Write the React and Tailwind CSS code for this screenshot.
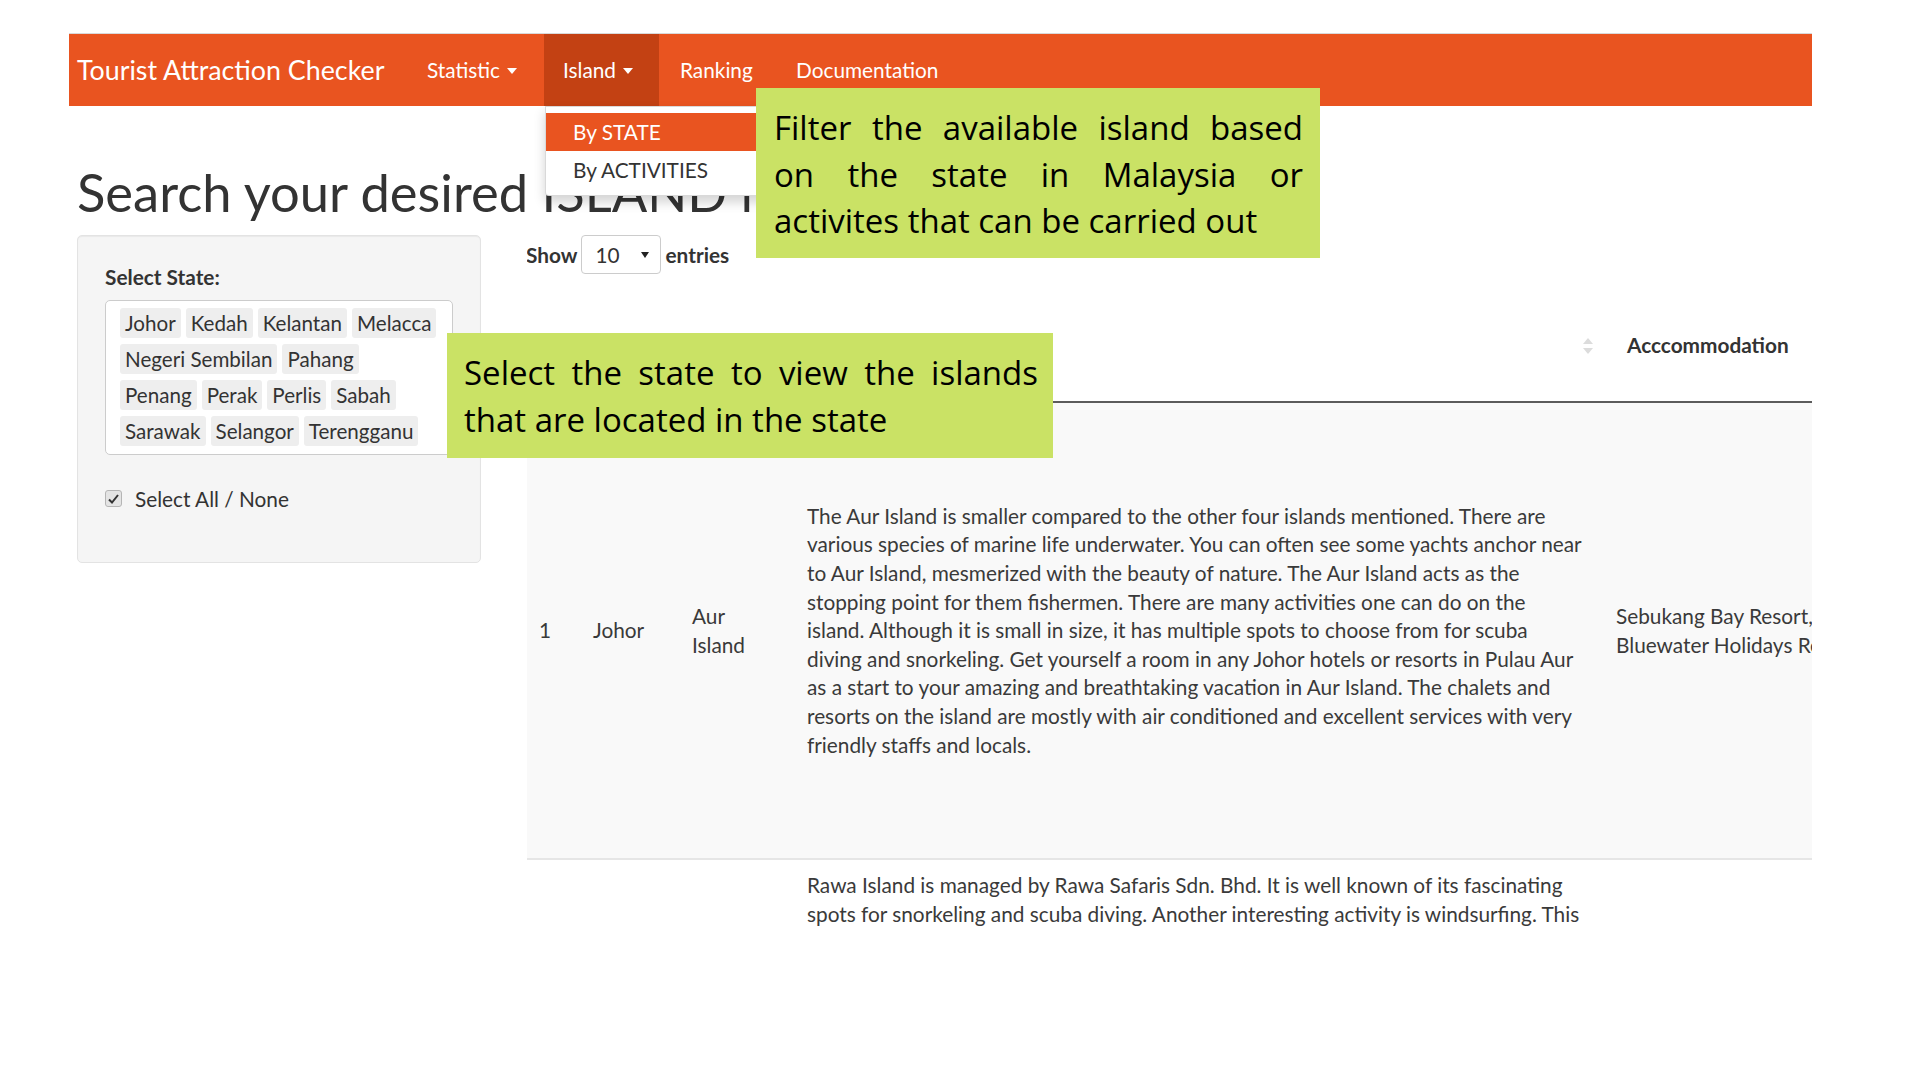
import React from "react";

const states = [
  ["Johor", "Kedah", "Kelantan", "Melacca"],
  ["Negeri Sembilan", "Pahang"],
  ["Penang", "Perak", "Perlis", "Sabah"],
  ["Sarawak", "Selangor", "Terengganu"],
];

const aurLines = [
  "The Aur Island is smaller compared to the other four islands mentioned. There are",
  "various species of marine life underwater. You can often see some yachts anchor near",
  "to Aur Island, mesmerized with the beauty of nature. The Aur Island acts as the",
  "stopping point for them fishermen. There are many activities one can do on the",
  "island. Although it is small in size, it has multiple spots to choose from for scuba",
  "diving and snorkeling. Get yourself a room in any Johor hotels or resorts in Pulau Aur",
  "as a start to your amazing and breathtaking vacation in Aur Island. The chalets and",
  "resorts on the island are mostly with air conditioned and excellent services with very",
  "friendly staffs and locals.",
];

const rawaLines = [
  "Rawa Island is managed by Rawa Safaris Sdn. Bhd. It is well known of its fascinating",
  "spots for snorkeling and scuba diving. Another interesting activity is windsurfing. This",
];

const Caret = () => (
  <svg width="10" height="6" viewBox="0 0 10 6" className="ml-[7px] mt-[2px]">
    <path d="M0 0h10L5 6z" fill="currentColor" />
  </svg>
);

// justified callout, every line but the last is stretched
const Callout = ({ lines, className }) => (
  <div className={`absolute bg-[#cae265] font-['Open_Sans',sans-serif] text-[33px] leading-[46.5px] text-black ${className}`}>
    {lines.map((l, i) => (
      <div
        key={i}
        className={i < lines.length - 1 ? "text-justify [text-align-last:justify]" : "text-left"}
      >
        {l}
      </div>
    ))}
  </div>
);

const Navbar = () => (
  <div className="ml-[69px] flex h-[72px] w-[1743px] items-stretch bg-[#e95420] text-[20.8px] text-white">
    <div className="flex w-[337px] items-center pl-[8px] text-[26.8px]">Tourist Attraction Checker</div>
    <div className="flex w-[138px] items-center pl-[21px]">
      Statistic <Caret />
    </div>
    <div className="flex w-[115px] items-center bg-[#c34113] pl-[19px]">
      Island <Caret />
    </div>
    <div className="flex w-[115px] items-center pl-[21px]">Ranking</div>
    <div className="flex items-center pl-[22px]">Documentation</div>
  </div>
);

const StatePanel = () => (
  <div className="h-[328px] w-[404px] rounded-[5px] border border-[#e3e3e3] bg-[#f5f5f5] px-[27px] pt-[26px] shadow-[inset_0_1px_1px_rgba(0,0,0,0.05)]">
    <div className="text-[20.8px] font-bold leading-[29px] text-[#333]">Select State:</div>
    <div className="mt-[9px] flex h-[155px] w-[348px] flex-col gap-[6px] rounded-[5px] border border-[#ccc] bg-white px-[14px] pt-[7px]">
      {states.map((row, i) => (
        <div key={i} className="flex gap-[5px]">
          {row.map((s) => (
            <span key={s} className="h-[30px] rounded-[3px] bg-[#eee] px-[5px] text-[20.6px] leading-[30px] text-[#333]">
              {s}
            </span>
          ))}
        </div>
      ))}
    </div>
    <div className="mt-[29px] flex items-center text-[20.8px] leading-[29px] text-[#333]">
      <span className="flex h-[17px] w-[17px] items-center justify-center rounded-[3px] border border-[#b5b5b5] bg-[#e4e4e4]">
        <svg width="11" height="10" viewBox="0 0 11 10">
          <path d="M1 5.5l3 3 6-7.5" fill="none" stroke="#333" strokeWidth="2" />
        </svg>
      </span>
      <span className="ml-[13px]">Select All / None</span>
    </div>
  </div>
);

const SortIcon = () => (
  <svg width="10" height="16" viewBox="0 0 10 16">
    <path d="M5 0l5 6H0z" fill="#dcdcdc" />
    <path d="M5 16l5-6H0z" fill="#dcdcdc" />
  </svg>
);

const IslandTable = () => (
  <div className="w-[1285px] overflow-hidden">
    <div className="-ml-px flex h-[39px] items-center text-[20.8px] font-bold text-[#333]">
      <span>Show</span>
      <div className="relative ml-[4px] flex h-[39px] w-[80px] items-center rounded-[4px] border border-[#ccc] bg-white pl-[13px] font-normal">
        10
        <svg width="8" height="6" viewBox="0 0 8 6" className="absolute right-[11px] top-[16px]">
          <path d="M0 0h8L4 6z" fill="#222" />
        </svg>
      </div>
      <span className="ml-[4px]">entries</span>
    </div>

    <div className="mt-[16px] w-[1400px] text-[20.8px] leading-[28.6px] text-[#3a3a3a]">
      <div className="flex h-[113px] items-center border-b-2 border-[#5c5c5c] font-bold text-[#333]">
        <div className="w-[55px]" />
        <div className="w-[99px]" />
        <div className="w-[115px]" />
        <div className="flex w-[809px] items-center justify-end pr-[12px]">
          <SortIcon />
        </div>
        <div className="pl-[22px]">Acccommodation</div>
      </div>

      <div className="flex h-[457px] items-center border-b-2 border-[#e6e6e6] bg-[#f9f9f9]">
        <div className="w-[55px] pl-[12px]">1</div>
        <div className="w-[99px] pl-[11px]">Johor</div>
        <div className="w-[115px] pl-[11px]">
          Aur
          <br />
          Island
        </div>
        <div className="w-[809px] pl-[11px]">
          {aurLines.map((l, i) => (
            <div key={i} className="whitespace-nowrap">{l}</div>
          ))}
        </div>
        <div className="whitespace-nowrap pl-[11px]">
          Sebukang Bay Resort,
          <br />
          Bluewater Holidays Resort
        </div>
      </div>

      <div className="flex pt-[11px]">
        <div className="w-[269px]" />
        <div className="w-[809px] pl-[11px]">
          {rawaLines.map((l, i) => (
            <div key={i} className="whitespace-nowrap">{l}</div>
          ))}
        </div>
      </div>
    </div>
  </div>
);

export default function App() {
  return (
    <div className="relative h-[1080px] w-[1920px] overflow-hidden bg-white font-['Lato',sans-serif]">
      <div className="ml-[69px] mt-[33px] h-px w-[1743px] bg-[#d9d9d9]" />
      <Navbar />

      <div className="ml-[77px] w-[1735px]">
        <h1 className="mt-[57px] h-[57px] whitespace-nowrap text-[52.5px] font-normal leading-[57px] text-[#333]">
          Search your desired ISLAND here
        </h1>
        <div className="mt-[15px] flex gap-[46px]">
          <StatePanel />
          <IslandTable />
        </div>
      </div>

      {/* Island dropdown */}
      <div className="absolute left-[545px] top-[106px] w-[229px] rounded-b-[4px] border border-[rgba(0,0,0,0.15)] bg-white py-[6px] text-[20.8px] shadow-[0_6px_12px_rgba(0,0,0,0.175)]">
        <div className="h-[38px] bg-[#e95420] pl-[27px] leading-[38px] text-white">By STATE</div>
        <div className="h-[38px] pl-[27px] leading-[38px] text-[#333]">By ACTIVITIES</div>
      </div>

      <Callout
        className="left-[756px] top-[88px] h-[170px] w-[564px] pl-[18px] pr-[17px] pt-[17px]"
        lines={["Filter the available island based", "on the state in Malaysia or", "activites that can be carried out"]}
      />
      <Callout
        className="left-[447px] top-[333px] h-[125px] w-[606px] pl-[17px] pr-[15px] pt-[17px]"
        lines={["Select the state to view the islands", "that are located in the state"]}
      />
    </div>
  );
}
